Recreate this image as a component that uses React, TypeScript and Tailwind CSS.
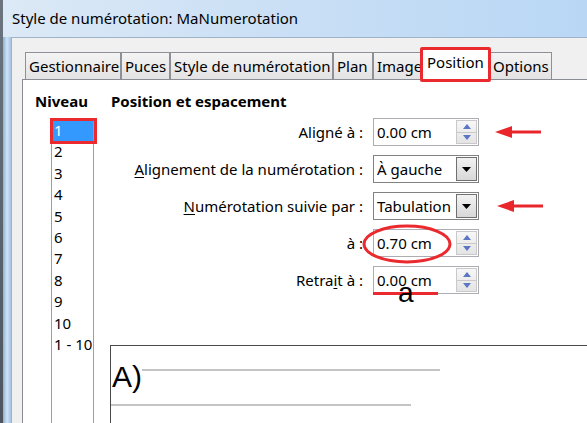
import React from "react";

const UI = "font-['Noto_Sans','Open_Sans',sans-serif]";

function SpinButtons() {
  return (
    <div className="flex h-[24px] w-[21px] flex-col border border-[#c9c9c9] bg-gradient-to-b from-[#f7f7f7] to-[#e4e4e4]">
      <div className="flex flex-1 items-center justify-center border-b border-[#c9c9c9]">
        <svg width="8" height="5" viewBox="0 0 8 5">
          <polygon points="0,5 4,0 8,5" fill="#5b77c4" />
        </svg>
      </div>
      <div className="flex flex-1 items-center justify-center">
        <svg width="8" height="5" viewBox="0 0 8 5">
          <polygon points="0,0 8,0 4,5" fill="#5b77c4" />
        </svg>
      </div>
    </div>
  );
}

function SpinField({ value, children }: { value: string; children?: React.ReactNode }) {
  return (
    <div className="relative flex h-[28px] w-[106px] items-center border border-[#abadb3] bg-white pr-[1px]">
      <span className="flex-1 pl-[3px] text-[15px] leading-none text-black">{value}</span>
      <SpinButtons />
      {children}
    </div>
  );
}

function ComboField({ value }: { value: string }) {
  return (
    <div className="flex h-[28px] w-[106px] items-center border border-[#828282] bg-white pr-[1px]">
      <span className="flex-1 pl-[3px] text-[15px] leading-none text-black">{value}</span>
      <div className="flex h-[24px] w-[21px] items-center justify-center border border-[#707070] bg-gradient-to-b from-[#f2f2f2] to-[#d8d8d8]">
        <svg width="9" height="5" viewBox="0 0 9 5">
          <polygon points="0,0 9,0 4.5,5" fill="#000" />
        </svg>
      </div>
    </div>
  );
}

function Arrow() {
  return (
    <svg width="46" height="14" viewBox="0 0 46 14" className="shrink-0">
      <line x1="14" y1="7" x2="46" y2="7" stroke="#e8262b" strokeWidth="3" />
      <polygon points="0,7 17,1 17,13" fill="#e8262b" />
    </svg>
  );
}

function Row({ label, children }: { label: React.ReactNode; children: React.ReactNode }) {
  return (
    <div className="flex h-[28px] items-center">
      <div className="w-[252px] pr-[0px] text-right text-[15px] text-black">{label}</div>
      <div className="ml-[10px] flex items-center">{children}</div>
    </div>
  );
}

const levels = ["1", "2", "3", "4", "5", "6", "7", "8", "9", "10", "1 - 10"];

const tabs = [
  { name: "Gestionnaire", w: "w-[96px]" },
  { name: "Puces", w: "w-[49px]" },
  { name: "Style de numérotation", w: "w-[163px]" },
  { name: "Plan", w: "w-[40px]" },
  { name: "Image", w: "w-[49px]" },
  { name: "Position", w: "w-[67px]", active: true },
  { name: "Options", w: "w-[63px]" },
];

export default function App() {
  return (
    <div className={`flex h-[423px] w-[587px] overflow-hidden bg-[#5b6570] ${UI}`}>
      <div className="w-[3px] shrink-0 bg-gradient-to-b from-[#6b757f] to-[#4c5560]" />
      <div className="flex flex-1 flex-col">
        {/* title bar */}
        <div className="flex h-[37px] shrink-0 items-center bg-gradient-to-r from-[#dce9f6] via-[#c9dff5] to-[#b9d7f5] pl-[9px]">
          <span className="text-[15px] text-black">Style de numérotation: MaNumerotation</span>
        </div>
        <div className="flex flex-1">
          {/* window frame */}
          <div className="w-[8px] shrink-0 bg-gradient-to-r from-[#8fb0cf] via-[#cfe4f8] to-[#a4c3e0]" />
          {/* client area */}
          <div className="flex flex-1 flex-col border-l border-t border-[#9fb3c8] bg-[#f0f0f0] pl-[10px] pt-[14px]">
            {/* tab strip */}
            <div className="ml-[3px] flex h-[27px] items-end gap-0">
              {tabs.map((t) =>
                t.active ? (
                  <div
                    key={t.name}
                    className={`relative z-10 flex h-[33px] translate-y-[1px] items-start border border-b-0 border-[#898c95] bg-white pl-[4px] pt-[4px] ${t.w}`}
                  >
                    <span className="text-[15px] leading-[20px] text-black">{t.name}</span>
                    <div className="absolute -bottom-[2px] -left-[3px] -right-[3px] -top-[1px] rounded-[2px] border-[3px] border-[#ea2a2f]" />
                  </div>
                ) : (
                  <div
                    key={t.name}
                    className={`flex h-[27px] items-center border border-b-0 border-[#8e9096] bg-gradient-to-b from-[#f4f4f4] to-[#e3e3e3] pl-[3px] ${t.w}`}
                  >
                    <span className="whitespace-nowrap text-[15px] leading-[20px] text-black">{t.name}</span>
                  </div>
                )
              )}
            </div>
            {/* tab panel */}
            <div className="flex flex-1 border-l border-t border-[#898c95] bg-white">
              {/* level list */}
              <div className="flex w-[88px] shrink-0 flex-col pl-[12px] pt-[11px]">
                <span className="text-[15px] font-bold leading-[20px] text-black">Niveau</span>
                <div className="ml-[16px] mt-[7px] h-[330px] w-[43px] border border-[#9a9ea6] pt-[1px]">
                  {levels.map((l, i) =>
                    i === 0 ? (
                      <div key={l} className="relative ml-[1px] h-[21.4px] bg-[#3399ff] pl-[1px] text-[15px] leading-[21.4px] text-white">
                        {l}
                        <div className="absolute -bottom-[3px] -left-[3px] -right-[4px] -top-[2px] border-[3px] border-[#ea2a2f]" />
                      </div>
                    ) : (
                      <div key={l} className="h-[21.4px] whitespace-nowrap pl-[2px] text-[15px] leading-[21.4px] text-black">
                        {l}
                      </div>
                    )
                  )}
                </div>
              </div>
              {/* position & spacing */}
              <div className="flex flex-1 flex-col pt-[11px]">
                <span className="text-[15px] font-bold leading-[20px] text-black">Position et espacement</span>
                <div className="mt-[7px] flex flex-col gap-[9px]">
                  <Row
                    label={
                      <>
                        Ali<u className="underline-offset-2">g</u>né à :
                      </>
                    }
                  >
                    <SpinField value="0.00 cm" />
                    <div className="ml-[16px]">
                      <Arrow />
                    </div>
                  </Row>
                  <Row
                    label={
                      <>
                        <u className="underline-offset-2">A</u>lignement de la numérotation :
                      </>
                    }
                  >
                    <ComboField value="À gauche" />
                  </Row>
                  <Row
                    label={
                      <>
                        <u className="underline-offset-2">N</u>umérotation suivie par :
                      </>
                    }
                  >
                    <ComboField value="Tabulation" />
                    <div className="ml-[18px]">
                      <Arrow />
                    </div>
                  </Row>
                  <Row label={<>à :</>}>
                    <SpinField value="0.70 cm">
                      <svg
                        width="90"
                        height="40"
                        viewBox="0 0 90 40"
                        className="absolute left-[-12px] top-[-6px]"
                      >
                        <ellipse cx="45" cy="20" rx="43" ry="18" fill="none" stroke="#ea2a2f" strokeWidth="3" />
                      </svg>
                    </SpinField>
                  </Row>
                  <Row
                    label={
                      <>
                        Retra<u className="underline-offset-2">i</u>t à :
                      </>
                    }
                  >
                    <SpinField value="0.00 cm">
                      <div className="absolute left-[-1px] top-[25px] h-[3px] w-[65px] bg-[#ea2a2f]" />
                      <span className="absolute left-[24px] top-[12px] font-['Liberation_Sans',Arial,sans-serif] text-[28px] leading-[28px] text-black">
                        a
                      </span>
                    </SpinField>
                  </Row>
                </div>
                {/* preview */}
                <div className="-ml-[1px] mt-[51px] flex-1 border-l border-t border-[#4a4a4a] pt-[16px] font-['Liberation_Sans',Arial,sans-serif]">
                  <div className="flex items-start">
                    <span className="ml-[1px] text-[30px] leading-[30px] text-black">A)</span>
                    <div className="mt-[7px] h-[2px] w-[298px] bg-[#c4c4c4]" />
                  </div>
                  <div className="mt-[12px] h-[2px] w-[300px] bg-[#c4c4c4]" />
                </div>
              </div>
            </div>
          </div>
        </div>
      </div>
    </div>
  );
}
